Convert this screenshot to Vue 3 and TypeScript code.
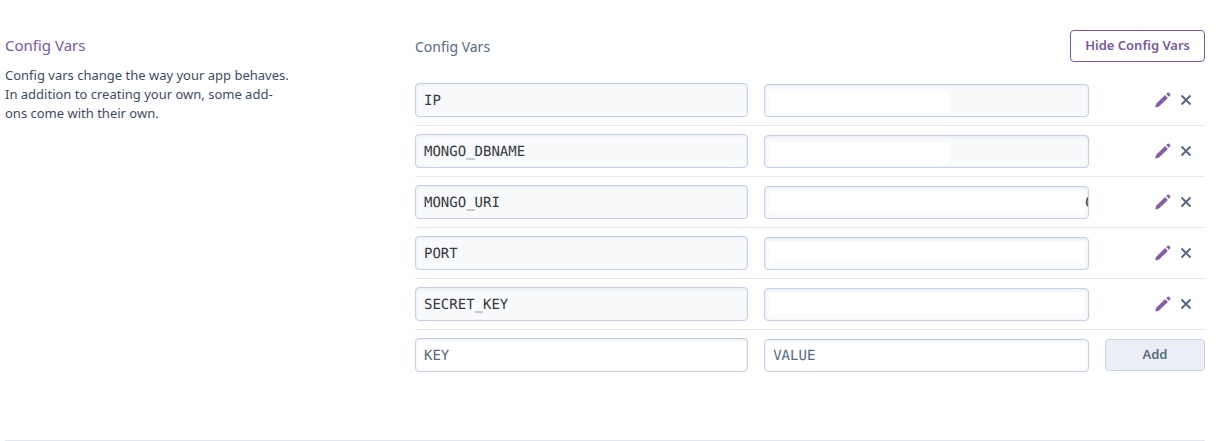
<script setup lang="ts">
import { ref } from 'vue'

interface ConfigVar {
  key: string
  value: string
  mask: 'partial' | 'full'
}

const configVars = ref<ConfigVar[]>([
  { key: 'IP', value: '', mask: 'partial' },
  { key: 'MONGO_DBNAME', value: '', mask: 'partial' },
  { key: 'MONGO_URI', value: ' '.repeat(37) + 'C', mask: 'full' },
  { key: 'PORT', value: '', mask: 'full' },
  { key: 'SECRET_KEY', value: '', mask: 'full' },
])
const newKey = ref('')
const newValue = ref('')

function removeVar(index: number) {
  configVars.value.splice(index, 1)
}

function addVar() {
  if (!newKey.value) return
  configVars.value.push({ key: newKey.value, value: newValue.value, mask: 'full' })
  newKey.value = ''
  newValue.value = ''
}
</script>

<template>
  <main class="page">
    <section class="settings">
      <div class="about">
        <h2>Config Vars</h2>
        <p>Config vars change the way your app behaves. In addition to creating your own, some add-ons come with their own.</p>
      </div>
      <div class="panel">
        <header class="panel-head">
          <h3>Config Vars</h3>
          <button type="button" class="btn outline">Hide Config Vars</button>
        </header>
        <table class="vars">
          <colgroup>
            <col class="col-key" />
            <col />
            <col class="col-actions" />
          </colgroup>
          <tbody>
            <tr v-for="(item, i) in configVars" :key="item.key">
              <td><input class="field key" type="text" readonly :value="item.key" aria-label="Key" /></td>
              <td><input class="field" :class="item.mask" type="text" readonly :value="item.value" :aria-label="item.key + ' value'" /></td>
              <td>
                <div class="actions">
                  <button type="button" class="icon" :aria-label="'Edit ' + item.key">
                    <svg width="16" height="16" viewBox="0 0 16 16" fill="#845fa8">
                      <path d="M.3 15.6Q.5 12.6 1.7 11.3L10.1 3.1 12.9 5.9 4.6 14Q3.3 15.2.3 15.6Z" />
                      <path d="M11.2 2.1 12.7.7Q13.4.2 14.1.8L15.2 1.9Q15.8 2.6 15.2 3.3L13.9 4.8Z" />
                    </svg>
                  </button>
                  <button type="button" class="icon" :aria-label="'Remove ' + item.key" @click="removeVar(i)">
                    <svg width="16" height="16" viewBox="0 0 16 16" fill="none" stroke="#596981" stroke-width="2">
                      <path d="M3.5 3.5 12.5 12.5M12.5 3.5 3.5 12.5" />
                    </svg>
                  </button>
                </div>
              </td>
            </tr>
          </tbody>
          <tfoot>
            <tr>
              <td><input v-model="newKey" class="field key editable" type="text" placeholder="KEY" aria-label="New key" /></td>
              <td><input v-model="newValue" class="field editable" type="text" placeholder="VALUE" aria-label="New value" /></td>
              <td><button type="button" class="btn add" @click="addVar">Add</button></td>
            </tr>
          </tfoot>
        </table>
      </div>
    </section>
  </main>
</template>

<style>
body {
  margin: 0;
  background: #fff;
}
</style>

<style scoped>
.page {
  padding: 30px 15px 0 5px;
  font-family: "Noto Sans", sans-serif;
  font-size: 13px;
  color: #3f4b63;
}
.settings {
  display: grid;
  grid-template-columns: 410px 1fr;
  padding-bottom: 60px;
  border-bottom: 1px solid #e3e7f1;
}
h2,
h3,
p {
  margin: 0;
  font-weight: 400;
}
.about {
  padding-top: 3px;
}
h2 {
  font-size: 15px;
  line-height: 24px;
  color: #79589f;
}
p {
  max-width: 286px;
  margin-top: 9px;
  line-height: 19px;
}
.panel-head {
  display: flex;
  justify-content: space-between;
  align-items: center;
  margin-bottom: 13px;
}
h3 {
  padding-top: 2px;
  font-size: 14px;
  line-height: 24px;
  color: #596981;
}
.btn {
  box-sizing: border-box;
  height: 32px;
  padding: 0 14px 2px;
  border-radius: 4px;
  font: 600 13px/20px "Noto Sans", sans-serif;
  cursor: pointer;
}
.outline {
  border: 1px solid #79589f;
  background: #fff;
  color: #79589f;
}
.add {
  width: 100%;
  border: 1px solid #cad3e5;
  background: #ebeef4;
  color: #596981;
}
.vars {
  width: 100%;
  table-layout: fixed;
  border-collapse: separate;
  border-spacing: 0;
}
.col-key {
  width: 44.2%;
}
.col-actions {
  width: 100px;
}
td {
  height: 50px;
  padding: 0 16px 0 0;
  vertical-align: middle;
}
td:last-child {
  padding-right: 0;
}
tbody td {
  border-bottom: 1px solid #e3e7f1;
}
.field {
  display: block;
  box-sizing: border-box;
  width: 100%;
  height: 33px;
  padding: 2px 0 0 8px;
  border: 1px solid #c6cfe3;
  border-radius: 4px;
  background-color: #f9fafc;
  background-repeat: no-repeat;
  background-image: none;
  box-shadow: inset 0 1px 3px #e6eaf3;
  font: 14px/22px "DejaVu Sans Mono", monospace;
  text-rendering: geometricPrecision;
  color: #36383d;
  outline: none;
}
.key {
  height: 34px;
}
.partial {
  background-image: linear-gradient(#fff, #fff);
  background-position: 4px 6px;
  background-size: 180px 22px;
}
.full {
  background-image: linear-gradient(#fff, #fff);
  background-position: 4px 4px;
  background-size: calc(100% - 7px) 21px;
}
.editable {
  background-color: #fff;
}
.editable::placeholder {
  color: #596981;
  opacity: 1;
}
.actions {
  display: flex;
  justify-content: flex-end;
  gap: 7px;
  padding-right: 11px;
}
.icon {
  display: block;
  width: 16px;
  height: 16px;
  padding: 0;
  border: 0;
  background: none;
  cursor: pointer;
}
.icon svg {
  display: block;
}
</style>
